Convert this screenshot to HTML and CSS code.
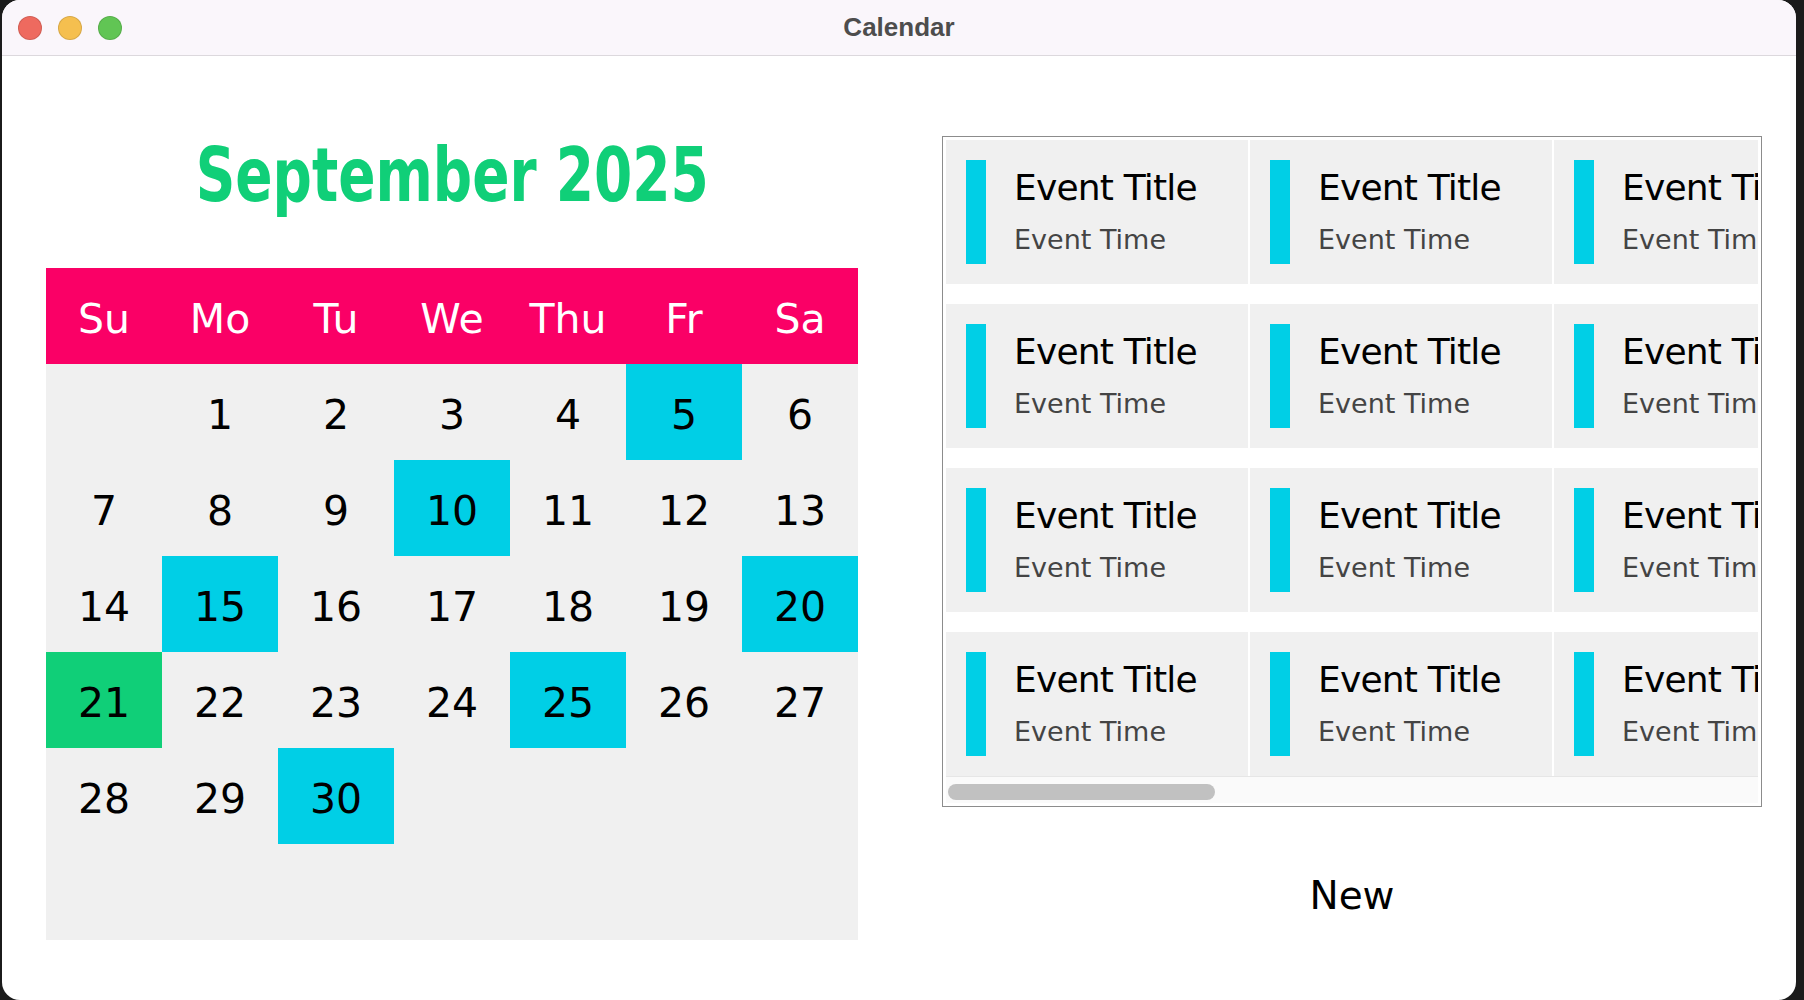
FILE: index.html
```html
<!DOCTYPE html>
<html lang="en">
<head>
<meta charset="utf-8">
<title>Calendar</title>
<link rel="stylesheet" href="styles.css">
</head>
<body>
<div class="window">
  <div class="titlebar">
    <div class="lights">
      <span class="light red"></span><span class="light yellow"></span><span class="light green"></span>
    </div>
    <div class="wtitle">Calendar</div>
    <div></div>
  </div>
  <div class="content">
    <div class="left">
      <div class="month"><span class="month-text">September 2025</span></div>
      <div class="cal">
        <div class="dow">Su</div><div class="dow">Mo</div><div class="dow">Tu</div><div class="dow">We</div><div class="dow">Thu</div><div class="dow">Fr</div><div class="dow">Sa</div>
        <div class="day"></div><div class="day">1</div><div class="day">2</div><div class="day">3</div><div class="day">4</div><div class="day hl">5</div><div class="day">6</div>
        <div class="day">7</div><div class="day">8</div><div class="day">9</div><div class="day hl">10</div><div class="day">11</div><div class="day">12</div><div class="day">13</div>
        <div class="day">14</div><div class="day hl">15</div><div class="day">16</div><div class="day">17</div><div class="day">18</div><div class="day">19</div><div class="day hl">20</div>
        <div class="day today">21</div><div class="day">22</div><div class="day">23</div><div class="day">24</div><div class="day hl">25</div><div class="day">26</div><div class="day">27</div>
        <div class="day">28</div><div class="day">29</div><div class="day hl">30</div><div class="day"></div><div class="day"></div><div class="day"></div><div class="day"></div>
        <div class="day"></div><div class="day"></div><div class="day"></div><div class="day"></div><div class="day"></div><div class="day"></div><div class="day"></div>
      </div>
    </div>
    <div class="right">
      <div class="panel">
        <div class="scroll">
          <div class="viewport">
            <div class="events">
              <div class="card"><div class="bar"></div><div class="text"><div class="etitle">Event Title</div><div class="etime">Event Time</div></div></div>
              <div class="card"><div class="bar"></div><div class="text"><div class="etitle">Event Title</div><div class="etime">Event Time</div></div></div>
              <div class="card"><div class="bar"></div><div class="text"><div class="etitle">Event Title</div><div class="etime">Event Time</div></div></div>
              <div class="card"><div class="bar"></div><div class="text"><div class="etitle">Event Title</div><div class="etime">Event Time</div></div></div>
              <div class="card"><div class="bar"></div><div class="text"><div class="etitle">Event Title</div><div class="etime">Event Time</div></div></div>
              <div class="card"><div class="bar"></div><div class="text"><div class="etitle">Event Title</div><div class="etime">Event Time</div></div></div>
              <div class="card"><div class="bar"></div><div class="text"><div class="etitle">Event Title</div><div class="etime">Event Time</div></div></div>
              <div class="card"><div class="bar"></div><div class="text"><div class="etitle">Event Title</div><div class="etime">Event Time</div></div></div>
              <div class="card"><div class="bar"></div><div class="text"><div class="etitle">Event Title</div><div class="etime">Event Time</div></div></div>
              <div class="card"><div class="bar"></div><div class="text"><div class="etitle">Event Title</div><div class="etime">Event Time</div></div></div>
              <div class="card"><div class="bar"></div><div class="text"><div class="etitle">Event Title</div><div class="etime">Event Time</div></div></div>
              <div class="card"><div class="bar"></div><div class="text"><div class="etitle">Event Title</div><div class="etime">Event Time</div></div></div>
            </div>
          </div>
          <div class="hbar"><div class="thumb"></div></div>
        </div>
      </div>
      <div class="new">New</div>
    </div>
  </div>
</div>
</body>
</html>
```

FILE: styles.css
```css
html, body {
  margin: 0;
  height: 1000px;
  overflow: hidden;
  background: #1b1b1b;
}
body {
  padding-left: 2px;
  font-family: "DejaVu Sans", sans-serif;
}
.window {
  width: 1794px;
  height: 1000px;
  background: #ffffff;
  border-radius: 18px;
  overflow: hidden;
}
.titlebar {
  height: 55px;
  border-bottom: 1px solid #dcd8dd;
  background: #faf6fb;
  display: grid;
  grid-template-columns: 1fr auto 1fr;
  align-items: center;
}
.lights {
  display: flex;
  gap: 16px;
  padding-left: 16px;
}
.light {
  width: 24px;
  height: 24px;
  border-radius: 50%;
  box-sizing: border-box;
  border: 1px solid rgba(0, 0, 0, 0.12);
}
.red { background: #ee6a5f; }
.yellow { background: #f5bf4f; }
.green { background: #61c554; }
.wtitle {
  font-family: "Liberation Sans", Arial, sans-serif;
  font-weight: bold;
  font-size: 26px;
  line-height: 55px;
  color: #4d4d4d;
}
.content {
  display: flex;
  padding-left: 44px;
}
.left {
  width: 812px;
}
.month {
  height: 212px;
  box-sizing: border-box;
  padding-top: 69px;
  text-align: center;
  font-size: 74px;
  line-height: 100px;
}
.month-text {
  display: inline-block;
  font-weight: bold;
  color: #10cf78;
  transform: scaleX(0.743);
  white-space: nowrap;
}
.cal {
  display: grid;
  grid-template-columns: repeat(7, 116px);
  grid-auto-rows: 96px;
  background: #f0f0f0;
  font-size: 41px;
  color: #000;
}
.cal > div {
  display: flex;
  align-items: center;
  justify-content: center;
  padding-top: 5px;
  box-sizing: border-box;
}
.dow {
  background: #fa0066;
  color: #ffffff;
}
.day.hl { background: #00cfe6; }
.day.today { background: #10cf78; }
.right {
  margin-left: 84px;
  padding-top: 80px;
  width: 820px;
}
.panel {
  border: 1px solid #8c8c8c;
  padding: 3px;
  height: 671px;
  box-sizing: border-box;
}
.scroll {
  height: 663px;
  display: flex;
  flex-direction: column;
}
.viewport {
  height: 636px;
  overflow: hidden;
}
.events {
  display: grid;
  grid-template-columns: repeat(3, 302px);
  grid-template-rows: repeat(4, 144px);
  column-gap: 2px;
  row-gap: 20px;
  width: max-content;
}
.card {
  background: #f0f0f0;
  padding: 20px;
  box-sizing: border-box;
  display: flex;
  align-items: flex-start;
}
.bar {
  width: 20px;
  height: 104px;
  background: #00cfe6;
  flex: none;
}
.text {
  margin-left: 28px;
  white-space: nowrap;
}
.etitle {
  font-size: 36px;
  line-height: 56px;
  letter-spacing: -0.8px;
  color: #000;
}
.etime {
  font-size: 27px;
  line-height: 48px;
  color: #444;
}
.hbar {
  height: 27px;
  background: #fafafa;
  border-top: 1px solid #e6e6e6;
  box-sizing: border-box;
  padding: 7px 0 0 2px;
}
.thumb {
  width: 267px;
  height: 16px;
  border-radius: 8px;
  background: #c1c1c1;
}
.new {
  margin-top: 59px;
  text-align: center;
  font-size: 39px;
  line-height: 60px;
  color: #000;
}
```
